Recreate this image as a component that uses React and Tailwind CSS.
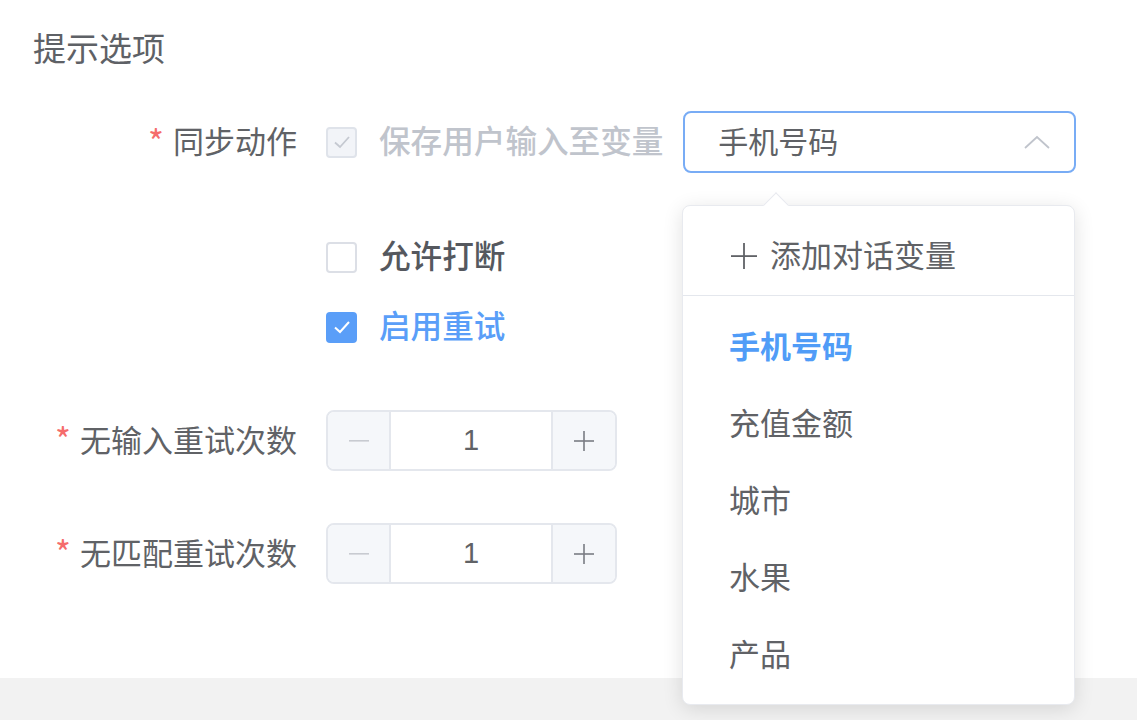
import React from "react";

const FONT = { fontFamily: '"Noto Sans CJK SC", "Noto Sans", sans-serif' };

function Check({ state }) {
  if (state === "disabled") {
    return (
      <div className="w-[31px] h-[31px] rounded-[4px] border-2 border-[#dfe3ea] bg-[#f2f4f8] flex items-center justify-center">
        <svg width="18" height="14" viewBox="0 0 18 14" fill="none">
          <path d="M2 7.5 L7 12 L16 2" stroke="#c5c9d1" strokeWidth="1.8" />
        </svg>
      </div>
    );
  }
  if (state === "checked") {
    return (
      <div className="w-[31px] h-[31px] rounded-[4px] bg-[#5a9ef8] flex items-center justify-center">
        <svg width="18" height="14" viewBox="0 0 18 14" fill="none">
          <path d="M2 7.5 L7 12 L16 2" stroke="#ffffff" strokeWidth="2" />
        </svg>
      </div>
    );
  }
  return <div className="w-[31px] h-[31px] rounded-[4px] border-2 border-[#dcdfe6] bg-white" />;
}

function Label({ text, required }) {
  return (
    <div className="w-[297px] flex justify-end items-center text-[31px] text-[#606266] leading-none shrink-0 pb-[5px]">
      {required && <span className="text-[#f56c6c] text-[34px] mr-[9px] relative top-[1px]">*</span>}
      <span>{text}</span>
    </div>
  );
}

function NumberInput() {
  return (
    <div className="ml-[29px] w-[291px] h-[61px] rounded-[8px] border-2 border-[#e4e7ed] flex overflow-hidden">
      <div className="w-[63px] h-full bg-[#f5f7fa] border-r-2 border-[#e4e7ed] flex items-center justify-center">
        <svg width="20" height="2" viewBox="0 0 20 2"><rect x="0" y="0" width="20" height="1.6" fill="#c8cbd1" /></svg>
      </div>
      <div className="flex-1 flex items-center justify-center text-[29px] text-[#606266]" style={{ fontFamily: '"Liberation Sans", Arial, sans-serif' }}>1</div>
      <div className="w-[64px] h-full bg-[#f5f7fa] border-l-2 border-[#e4e7ed] flex items-center justify-center">
        <svg width="20" height="20" viewBox="0 0 20 20">
          <rect x="0" y="9.2" width="20" height="1.6" fill="#7a7d84" />
          <rect x="9.2" y="0" width="1.6" height="20" fill="#7a7d84" />
        </svg>
      </div>
    </div>
  );
}

export default function App() {
  const items = ["充值金额", "城市", "水果", "产品"];
  return (
    <div className="relative w-[1137px] h-[720px] bg-white overflow-hidden flex flex-col" style={FONT}>
      <div className="h-[678px] flex flex-col">
        <div className="pl-[33px] pt-[27px] h-[67px] text-[33px] leading-[40px] text-[#5e6166]">提示选项</div>

        <div className="mt-[44px] h-[62px] flex items-center">
          <Label text="同步动作" required />
          <div className="ml-[29px] flex items-center">
            <Check state="disabled" />
            <span className="ml-[22px] text-[31.6px] font-medium text-[#c0c4cc] leading-none pb-[5px]">保存用户输入至变量</span>
          </div>
          <div className="ml-[20px] w-[393px] h-[62px] rounded-[8px] border-2 border-[#78acf5] flex items-center justify-between pl-[33px] pr-[24px]">
            <span className="text-[30px] text-[#606266] leading-none pb-[5px]">手机号码</span>
            <svg width="26" height="14" viewBox="0 0 26 14" fill="none">
              <path d="M1 13 L13 2 L25 13" stroke="#c0c4cc" strokeWidth="1.8" />
            </svg>
          </div>
        </div>

        <div className="mt-[68px] h-[32px] flex items-center">
          <div className="w-[297px] shrink-0" />
          <div className="ml-[29px] flex items-center">
            <Check state="unchecked" />
            <span className="ml-[22px] text-[31.6px] font-medium text-[#55585e] leading-none pb-[5px]">允许打断</span>
          </div>
        </div>

        <div className="mt-[38px] h-[32px] flex items-center">
          <div className="w-[297px] shrink-0" />
          <div className="ml-[29px] flex items-center">
            <Check state="checked" />
            <span className="ml-[22px] text-[31.6px] font-medium text-[#5a9ef8] leading-none pb-[5px]">启用重试</span>
          </div>
        </div>

        <div className="mt-[67px] h-[61px] flex items-center">
          <Label text="无输入重试次数" required />
          <NumberInput />
        </div>

        <div className="mt-[52px] h-[61px] flex items-center">
          <Label text="无匹配重试次数" required />
          <NumberInput />
        </div>
      </div>
      <div className="flex-1 bg-[#f2f2f2]" />

      <div className="absolute left-[682px] top-[205px] w-[393px] h-[500px] bg-white rounded-[8px] border border-[#e8eaef] shadow-[0_4px_20px_rgba(0,0,0,0.12)]">
        <div className="absolute left-[84px] top-[-10px] w-[18px] h-[18px] bg-white border-l border-t border-[#e8eaef] rotate-45" />
        <div className="relative h-[89px] pt-[10px] flex items-center pl-[48px] text-[31px] text-[#606266] leading-none">
          <svg width="26" height="26" viewBox="0 0 26 26" className="mr-[13px]">
            <rect x="0" y="12.2" width="26" height="1.8" fill="#606266" />
            <rect x="12.1" y="0" width="1.8" height="26" fill="#606266" />
          </svg>
          <span className="pb-[4px]">添加对话变量</span>
        </div>
        <div className="h-px bg-[#e4e7ed]" />
        <div className="pt-[10px]">
          <div className="h-[77px] flex items-center pl-[46px] text-[31px] font-bold text-[#509cf7] leading-none">手机号码</div>
          {items.map((t) => (
            <div key={t} className="h-[77px] flex items-center pl-[46px] text-[31px] text-[#606266] leading-none">{t}</div>
          ))}
        </div>
      </div>
    </div>
  );
}
